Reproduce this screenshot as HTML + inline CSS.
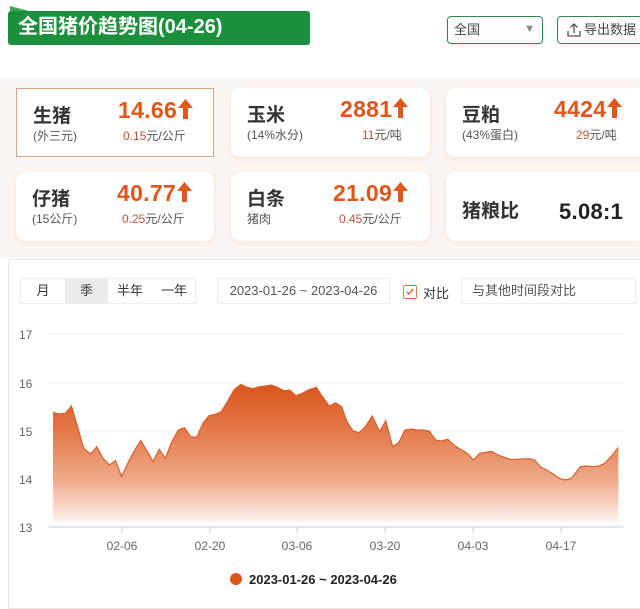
<!DOCTYPE html>
<html><head><meta charset="utf-8"><style>
*{margin:0;padding:0;box-sizing:border-box}
body{width:640px;height:608px;overflow:hidden;background:#fff;font-family:"Liberation Sans","Noto Sans CJK SC",sans-serif;position:relative;color:#333}
.abs{position:absolute}
.banner{left:8px;top:11px;width:302px;height:34px;background:#1a8f3c;border-radius:3px;color:#fff;font-weight:bold;font-size:20px;line-height:32px;padding-left:10px}
.tab{left:10px;top:6px;width:0;height:0;border-left:23px solid #3aa855;border-top:6px solid transparent}
.sel{left:447px;top:16px;width:96px;height:28px;border:1.5px solid #2a8a55;border-radius:4px;font-size:13px;line-height:25px;padding-left:6px;color:#444}
.btn{left:557px;top:16px;width:100px;height:28px;border:1.5px solid #2a8a55;border-radius:4px;font-size:13px;line-height:25px;padding-left:26px;color:#444}
.cards{left:0;top:78px;width:640px;height:180px;background:#fcf6f2}
.card{position:absolute;background:#fff;border-radius:10px;box-shadow:0 2px 6px rgba(230,200,180,.35)}
.card .t{position:absolute;left:16px;top:12px;font-size:19px;font-weight:bold;color:#333}
.card .s{position:absolute;left:16px;top:38px;font-size:12px;color:#555}
.card .p{position:absolute;top:8px;font-size:23px;font-weight:bold;color:#e0561b;letter-spacing:.3px}
.card .d{position:absolute;top:38px;font-size:12px;color:#c0553a}
.card .d b{font-weight:normal;color:#555}
.arr{display:inline-block;vertical-align:top;margin-top:1px}
.panel{left:8px;top:259px;width:640px;height:350px;border:1px solid #e8e8e8;background:#fff}
.seg{left:20px;top:278px;width:176px;height:26px;border:1px solid #eee;font-size:13px;line-height:24px;color:#333}
.seg span{position:absolute;top:0;text-align:center}
.date{left:217px;top:278px;width:173px;height:26px;border:1px solid #eee;font-size:13px;line-height:24px;color:#555;text-align:center}
.inp{left:461px;top:278px;width:175px;height:26px;border:1px solid #eee;font-size:13px;line-height:24px;color:#555;padding-left:10px}
</style></head><body>
<div class="abs tab"></div>
<div class="abs banner">全国猪价趋势图(04-26)</div>
<div class="abs sel">全国<span style="position:absolute;right:7px;top:0;color:#888;font-size:11px">▼</span></div>
<div class="abs btn"><svg class="abs" style="left:8px;top:5px" width="16" height="16" viewBox="0 0 16 16" fill="none" stroke="#555" stroke-width="1.3"><path d="M8 11V2M4.5 5.5L8 2l3.5 3.5M2 9v5h12V9"/></svg>导出数据</div>

<div class="abs cards"></div>
<div class="card" style="left:16px;top:88px;width:198px;height:69px;border:1px solid #d9a58a;border-radius:0;box-shadow:none">
<div class="t">生猪</div><div class="s">(外三元)</div>
<div class="p" style="left:101px">14.66<svg class="arr" width="17" height="22" viewBox="0 0 17 22"><path d="M8.5 1L16 10H11V21H6V10H1Z" fill="#e0561b"/></svg></div>
<div class="d" style="left:106px">0.15<b>元/公斤</b></div></div>
<div class="card" style="left:231px;top:88px;width:199px;height:69px">
<div class="t">玉米</div><div class="s">(14%水分)</div>
<div class="p" style="left:109px">2881<svg class="arr" width="17" height="22" viewBox="0 0 17 22"><path d="M8.5 1L16 10H11V21H6V10H1Z" fill="#e0561b"/></svg></div>
<div class="d" style="left:131px">11<b>元/吨</b></div></div>
<div class="card" style="left:446px;top:88px;width:200px;height:69px">
<div class="t">豆粕</div><div class="s">(43%蛋白)</div>
<div class="p" style="left:108px">4424<svg class="arr" width="17" height="22" viewBox="0 0 17 22"><path d="M8.5 1L16 10H11V21H6V10H1Z" fill="#e0561b"/></svg></div>
<div class="d" style="left:130px">29<b>元/吨</b></div></div>

<div class="card" style="left:16px;top:172px;width:198px;height:69px">
<div class="t">仔猪</div><div class="s">(15公斤)</div>
<div class="p" style="left:101px">40.77<svg class="arr" width="17" height="22" viewBox="0 0 17 22"><path d="M8.5 1L16 10H11V21H6V10H1Z" fill="#e0561b"/></svg></div>
<div class="d" style="left:106px">0.25<b>元/公斤</b></div></div>
<div class="card" style="left:231px;top:172px;width:199px;height:69px">
<div class="t">白条</div><div class="s">猪肉</div>
<div class="p" style="left:102px">21.09<svg class="arr" width="17" height="22" viewBox="0 0 17 22"><path d="M8.5 1L16 10H11V21H6V10H1Z" fill="#e0561b"/></svg></div>
<div class="d" style="left:108px">0.45<b>元/公斤</b></div></div>
<div class="card" style="left:446px;top:172px;width:200px;height:69px">
<div class="t" style="top:24px">猪粮比</div>
<div class="p" style="left:113px;top:27px;color:#222;font-size:22px">5.08:1</div></div>

<div class="abs panel"></div>
<div class="abs seg"><span style="left:0;width:44px">月</span><span style="left:44px;width:43px;background:#ececec;color:#444">季</span><span style="left:87px;width:44px">半年</span><span style="left:131px;width:44px">一年</span></div>
<div class="abs date">2023-01-26 ~ 2023-04-26</div>
<div class="abs" style="left:403px;top:285px;width:14px;height:14px;border:1px solid #e07a5a;border-radius:2px"><svg width="12" height="12" viewBox="0 0 12 12" style="display:block"><path d="M3 6l2 2 4-5" fill="none" stroke="#e0561b" stroke-width="1.3"/></svg></div>
<div class="abs" style="left:423px;top:283px;font-size:13px;color:#333">对比</div>
<div class="abs inp">与其他时间段对比</div>

<svg class="abs" style="left:0;top:250px" width="640" height="358">
<defs><linearGradient id="g" x1="0" y1="0" x2="0" y2="1"><stop offset="0" stop-color="#d9541a"/><stop offset="0.35" stop-color="#e47a4c"/><stop offset="0.7" stop-color="#eeab8c"/><stop offset="1" stop-color="#fdf3ee"/></linearGradient></defs>
<g stroke="#efefef" stroke-width="1"><line x1="48" y1="84" x2="624" y2="84"/><line x1="48" y1="133" x2="624" y2="133"/><line x1="48" y1="181" x2="624" y2="181"/><line x1="48" y1="229" x2="624" y2="229"/></g>
<g font-size="12" fill="#666" font-family="Liberation Sans,sans-serif"><text x="19" y="89">17</text><text x="19" y="138">16</text><text x="19" y="186">15</text><text x="19" y="234">14</text><text x="19" y="282">13</text>
<g text-anchor="middle"><text x="122" y="300">02-06</text><text x="210" y="300">02-20</text><text x="297" y="300">03-06</text><text x="385" y="300">03-20</text><text x="473" y="300">04-03</text><text x="561" y="300">04-17</text></g></g>
<g transform="scale(0.40816,0.33333)">
<path fill="url(#g)" stroke="none" d="M130,816 L130,487 145,492 160,490 175,468 190,530 205,595 222,612 237,590 252,625 268,645 283,632 298,680 315,635 330,600 345,572 360,602 375,635 390,598 405,625 420,578 437,540 452,533 467,560 482,562 497,520 512,497 527,493 542,485 557,455 573,420 590,403 605,412 620,416 635,410 650,408 665,405 680,412 695,422 710,420 725,437 740,430 755,420 775,412 790,440 807,468 822,458 837,470 850,515 865,543 880,548 895,530 912,498 930,545 945,512 962,590 977,578 992,540 1007,537 1022,540 1037,540 1052,543 1067,570 1082,573 1097,568 1112,585 1127,597 1145,610 1160,630 1175,610 1190,607 1205,604 1220,615 1235,622 1250,628 1265,628 1280,627 1295,626 1310,630 1325,652 1340,660 1355,672 1370,685 1385,690 1400,685 1422,650 1437,648 1452,650 1467,648 1482,640 1500,615 1515,592 L1515,816 Z"/>
<path fill="none" stroke="#d9612c" stroke-width="1.2" vector-effect="non-scaling-stroke" d="M130,487 145,492 160,490 175,468 190,530 205,595 222,612 237,590 252,625 268,645 283,632 298,680 315,635 330,600 345,572 360,602 375,635 390,598 405,625 420,578 437,540 452,533 467,560 482,562 497,520 512,497 527,493 542,485 557,455 573,420 590,403 605,412 620,416 635,410 650,408 665,405 680,412 695,422 710,420 725,437 740,430 755,420 775,412 790,440 807,468 822,458 837,470 850,515 865,543 880,548 895,530 912,498 930,545 945,512 962,590 977,578 992,540 1007,537 1022,540 1037,540 1052,543 1067,570 1082,573 1097,568 1112,585 1127,597 1145,610 1160,630 1175,610 1190,607 1205,604 1220,615 1235,622 1250,628 1265,628 1280,627 1295,626 1310,630 1325,652 1340,660 1355,672 1370,685 1385,690 1400,685 1422,650 1437,648 1452,650 1467,648 1482,640 1500,615 1515,592"/>
</g>
<line x1="48" y1="277" x2="624" y2="277" stroke="#ccd" stroke-width="1"/>
<g stroke="#ccd"><line x1="122" y1="277" x2="122" y2="283"/><line x1="210" y1="277" x2="210" y2="283"/><line x1="297" y1="277" x2="297" y2="283"/><line x1="385" y1="277" x2="385" y2="283"/><line x1="473" y1="277" x2="473" y2="283"/><line x1="561" y1="277" x2="561" y2="283"/></g>
<circle cx="236" cy="329" r="6" fill="#d9561b"/>
<text x="249" y="334" font-size="13" font-weight="bold" fill="#222" font-family="Liberation Sans,sans-serif">2023-01-26 ~ 2023-04-26</text>
</svg>
</body></html>
